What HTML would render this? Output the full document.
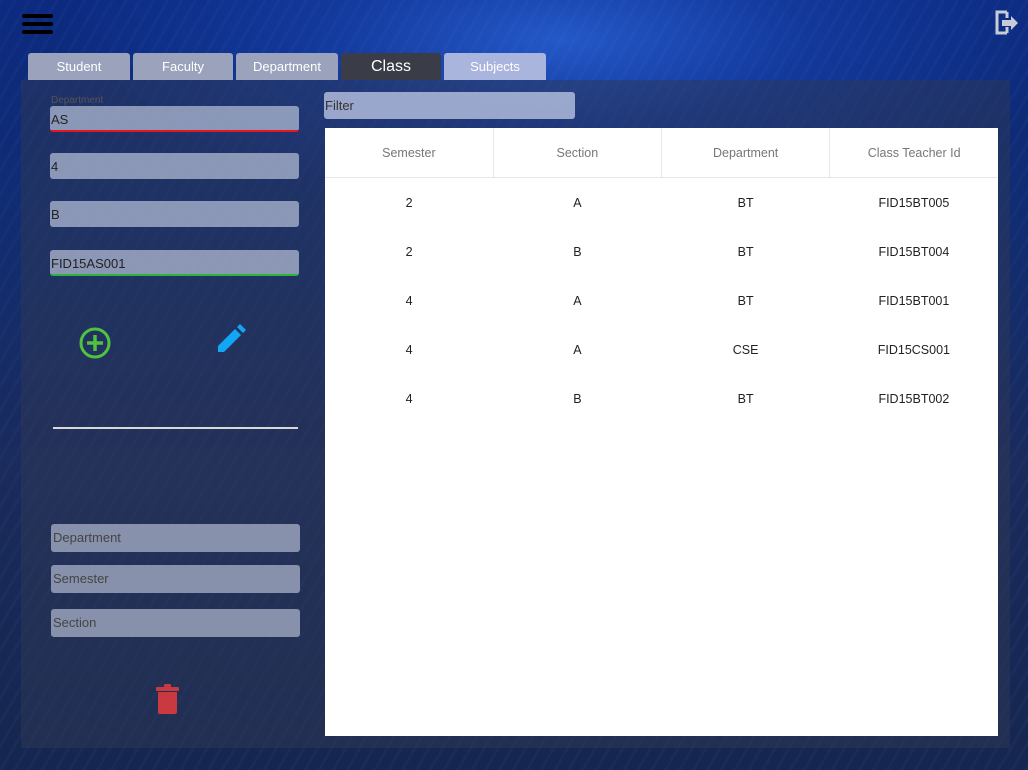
<!DOCTYPE html>
<html><head><style>
body{margin:0;width:1028px;height:770px;overflow:hidden;font-family:"Liberation Sans",sans-serif;
background:radial-gradient(ellipse 500px 180px at 560px 40px,#2458c8 0%,#12389a 50%,transparent 100%),
linear-gradient(180deg,#0c2a80 0%,#112c70 30%,#1a2b5c 60%,#15264f 100%);position:relative}
.a{position:absolute}
.panel{left:21px;top:80px;width:989px;height:668px;background:rgba(45,55,85,0.5)}
.tab{top:53px;height:27px;background:#9aa3bb;color:#fff;font-size:13px;text-align:center;line-height:28px;border-radius:3px 3px 0 0}
.inp{left:50px;width:249px;height:26px;background:rgba(175,185,210,0.75);border-radius:3px;font-size:13px;color:#222;line-height:27px;padding-left:1px;box-sizing:border-box}
.inp2{left:51px;width:249px;height:28px;background:rgba(170,178,200,0.75);border-radius:3px;font-size:13px;color:#444;line-height:28px;padding-left:2px;box-sizing:border-box}
table{border-collapse:collapse;width:673px;font-size:12.5px;color:#222;table-layout:fixed}
th{font-weight:normal;color:#777;height:49px;padding:0;border-right:1px solid #e6e6e6;border-bottom:1px solid #e6e6e6}
th:last-child{border-right:none}
td{height:49px;padding:0;text-align:center}
</style></head><body>
<div class="a" style="left:0;top:0;width:1028px;height:770px;background:repeating-linear-gradient(120deg,rgba(120,160,255,0.04) 0 3px,transparent 3px 12px)"></div>
<div class="a" style="left:22px;top:14px;width:31px;height:4px;background:#000;border-radius:2px"></div>
<div class="a" style="left:22px;top:22px;width:31px;height:4px;background:#000;border-radius:2px"></div>
<div class="a" style="left:22px;top:30px;width:31px;height:4px;background:#000;border-radius:2px"></div>
<svg class="a" style="left:994px;top:10px" width="28" height="26" viewBox="0 0 28 26"><path d="M13 2H3v21h10M13 2v6M13 23v-6" fill="none" stroke="#c8ccd6" stroke-width="3"/><path d="M8 10h9V6l7 7-7 7v-4H8z" fill="#c8ccd6"/></svg>
<div class="a panel"></div>
<div class="a tab" style="left:28px;width:102px">Student</div>
<div class="a tab" style="left:133px;width:100px">Faculty</div>
<div class="a tab" style="left:236px;width:102px">Department</div>
<div class="a tab" style="left:341px;width:100px;background:#3a3d48;font-size:16px">Class</div>
<div class="a tab" style="left:444px;width:102px;background:#a9b5dc">Subjects</div>
<div class="a" style="left:51px;top:95px;font-size:10px;color:#555">Department</div>
<div class="a inp" style="top:106px;border-bottom:2px solid #e8141e">AS</div>
<div class="a inp" style="top:153px">4</div>
<div class="a inp" style="top:201px">B</div>
<div class="a inp" style="top:250px;border-bottom:2px solid #2bb63a">FID15AS001</div>
<svg class="a" style="left:79px;top:327px" width="34" height="34" viewBox="0 0 34 34"><circle cx="16" cy="16" r="14" fill="none" stroke="#4fc23f" stroke-width="3"/><path d="M16 8v16M8 16h16" stroke="#4fc23f" stroke-width="3.5"/></svg>
<svg class="a" style="left:217px;top:323px" width="30" height="30" viewBox="0 0 30 30"><path d="M1 29v-6L18 6l6 6L7 29z" fill="#13a6f5"/><path d="M20 4l3-3 6 6-3 3z" fill="#13a6f5"/></svg>
<div class="a" style="left:53px;top:427px;width:245px;height:2px;background:#d8d8d8"></div>
<div class="a inp2" style="top:524px">Department</div>
<div class="a inp2" style="top:565px">Semester</div>
<div class="a inp2" style="top:609px">Section</div>
<svg class="a" style="left:156px;top:684px" width="24" height="31" viewBox="0 0 24 31"><rect x="0" y="3" width="23" height="4" rx="1" fill="#c93a40"/><rect x="8" y="0" width="7" height="4" rx="1" fill="#c93a40"/><path d="M2 8h19v20q0 2-2 2H4q-2 0-2-2z" fill="#c93a40"/></svg>
<div class="a" style="left:324px;top:92px;width:250px;height:27px;background:rgba(185,195,225,0.8);border-radius:3px;font-size:13px;color:#333;line-height:27px;padding-left:1px">Filter</div>
<div class="a" style="left:325px;top:128px;width:673px;height:608px;background:#fff">
<table><tr><th>Semester</th><th>Section</th><th>Department</th><th>Class Teacher Id</th></tr>
<tr><td>2</td><td>A</td><td>BT</td><td>FID15BT005</td></tr>
<tr><td>2</td><td>B</td><td>BT</td><td>FID15BT004</td></tr>
<tr><td>4</td><td>A</td><td>BT</td><td>FID15BT001</td></tr>
<tr><td>4</td><td>A</td><td>CSE</td><td>FID15CS001</td></tr>
<tr><td>4</td><td>B</td><td>BT</td><td>FID15BT002</td></tr>
</table></div>
</body></html>
